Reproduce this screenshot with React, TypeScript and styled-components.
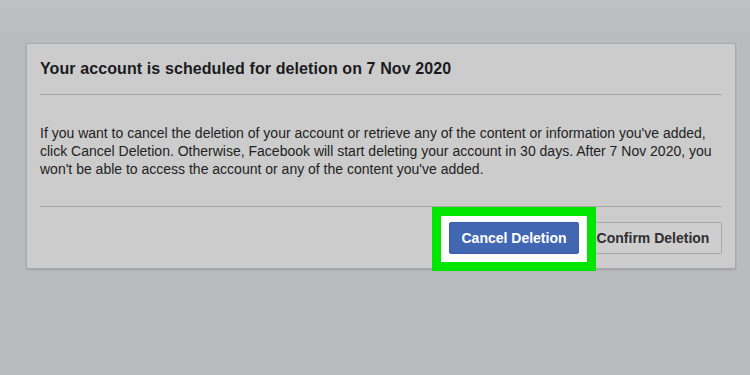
import * as React from 'react';
import styled, { createGlobalStyle } from 'styled-components';

const GlobalStyle = createGlobalStyle`
  html, body {
    margin: 0;
    padding: 0;
    background: #babbbf;
    font-family: 'Liberation Sans', Arial, sans-serif;
  }
`;

const Page = styled.div`
  width: 750px;
  height: 375px;
  padding: 43px 0 0 26px;
  box-sizing: border-box;
  background: linear-gradient(#bfc0c4, #babbbf 40px);
`;

const Card = styled.div`
  width: 710px;
  box-sizing: border-box;
  background: #cccccc;
  border: 1px solid #a9a9a9;
  border-radius: 2px;
  box-shadow: 0 1px 2px rgba(0, 0, 0, 0.15);
  padding: 0 13px;
`;

const Header = styled.div`
  padding: 15px 0 15px;
  border-bottom: 1px solid #a8a8a8;
`;

const Title = styled.h2`
  margin: 0;
  font-size: 16px;
  line-height: 20px;
  letter-spacing: 0.1px;
  font-weight: bold;
  color: #1a1b1f;
`;

const Body = styled.p`
  margin: 0;
  padding: 29px 0 28px;
  font-size: 14px;
  line-height: 18px;
  color: #222;
  border-bottom: 1px solid #a8a8a8;
`;

const Footer = styled.div`
  display: flex;
  justify-content: flex-end;
  align-items: center;
  gap: 5px;
  padding: 15px 0 14px;
`;

const Highlight = styled.span`
  position: relative;
  z-index: 1;
  display: inline-flex;
  &::before {
    content: '';
    position: absolute;
    top: -15px;
    left: -17px;
    right: -17px;
    bottom: -17px;
    border: 9px solid #00e600;
    background: #fff;
    z-index: -1;
  }
`;

const Button = styled.button<{ $primary?: boolean; $width: number }>`
  font-family: 'Liberation Sans', Arial, sans-serif;
  font-size: 14px;
  font-weight: bold;
  width: ${p => p.$width}px;
  height: 32px;
  padding: 0;
  text-align: center;
  border-radius: 2px;
  cursor: pointer;
  border: 1px solid ${p => (p.$primary ? '#3b5ea8' : '#a6a6a6')};
  background: ${p => (p.$primary ? '#4267b2' : '#cecece')};
  color: ${p => (p.$primary ? '#fff' : '#2f2f31')};
`;

export default function App() {
  return (
    <Page>
      <GlobalStyle />
      <Card>
        <Header>
          <Title>Your account is scheduled for deletion on 7 Nov 2020</Title>
        </Header>
        <Body>
          If you want to cancel the deletion of your account or retrieve any of
          the content or information you've added, click Cancel Deletion.
          Otherwise, Facebook will start deleting your account in 30 days.
          After 7 Nov 2020, you won't be able to access the account or any of
          the content you've added.
        </Body>
        <Footer>
          <Highlight>
            <Button $primary $width={130}>Cancel Deletion</Button>
          </Highlight>
          <Button $width={138}>Confirm Deletion</Button>
        </Footer>
      </Card>
    </Page>
  );
}
